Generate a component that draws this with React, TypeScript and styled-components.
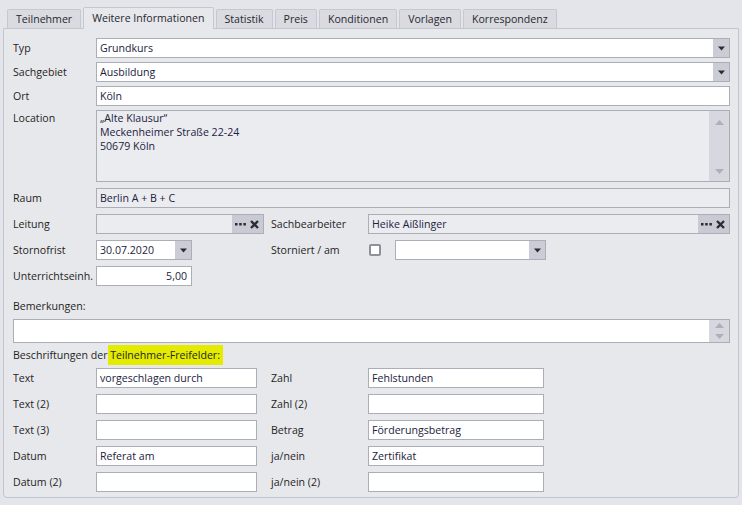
import React from "react";
import styled, { createGlobalStyle, css } from "styled-components";

const GlobalStyle = createGlobalStyle`
  body {
    margin: 0;
    background: #e4e5ea;
    font-family: "Open Sans", "Noto Sans", sans-serif;
    font-size: 10.6px;
    color: #1f1f23;
  }
`;

const TABS = ["Teilnehmer", "Weitere Informationen", "Statistik", "Preis", "Konditionen", "Vorlagen", "Korrespondenz"];

const Arrow = () => (
  <svg width="7" height="5" viewBox="0 0 7 5">
    <path d="M0 0.5h7L3.5 4.5z" fill="#2b2d33" />
  </svg>
);

const ScrollArrow = ({ up }: { up?: boolean }) => (
  <svg width="9" height="5" viewBox="0 0 9 5">
    <path d={up ? "M0 5h9L4.5 0z" : "M0 0h9L4.5 5z"} fill="#aeb0b8" />
  </svg>
);

const Dots = () => (
  <svg width="11" height="3" viewBox="0 0 11 3">
    <rect x="0" y="0" width="2.5" height="2.5" fill="#2b2d33" />
    <rect x="4.2" y="0" width="2.5" height="2.5" fill="#2b2d33" />
    <rect x="8.4" y="0" width="2.5" height="2.5" fill="#2b2d33" />
  </svg>
);

const Cross = () => (
  <svg width="9" height="9" viewBox="0 0 9 9">
    <path d="M1 1l7 7M8 1l-7 7" stroke="#2b2d33" strokeWidth="2.4" />
  </svg>
);

const Combo = ({ value, width }: { value?: string; width?: number }) => (
  <InputBox $width={width}>
    <InputText>{value}</InputText>
    <SideButton>
      <Arrow />
    </SideButton>
  </InputBox>
);

const FIELDS: [string, string, string, string][] = [
  ["Text", "vorgeschlagen durch", "Zahl", "Fehlstunden"],
  ["Text (2)", "", "Zahl (2)", ""],
  ["Text (3)", "", "Betrag", "Förderungsbetrag"],
  ["Datum", "Referat am", "ja/nein", "Zertifikat"],
  ["Datum (2)", "", "ja/nein (2)", ""],
];

const App = () => {
  return (
    <Root>
      <GlobalStyle />
      <TabBar>
        {TABS.map((t, i) => (
          <Tab key={t} $active={i === 1}>{t}</Tab>
        ))}
      </TabBar>
      <Panel>
        <TopGrid>
          <Label>Typ</Label>
          <Wide><Combo value="Grundkurs" /></Wide>
          <Label>Sachgebiet</Label>
          <Wide><Combo value="Ausbildung" /></Wide>
          <Label>Ort</Label>
          <Wide><InputBox><InputText>Köln</InputText></InputBox></Wide>
          <Label $top>Location</Label>
          <Wide>
            <Memo $height={72} $disabled>
              <MemoText>
                „Alte Klausur“<br />
                Meckenheimer Straße 22-24<br />
                50679 Köln
              </MemoText>
              <ScrollBar>
                <ScrollArrow up />
                <ScrollArrow />
              </ScrollBar>
            </Memo>
          </Wide>
        </TopGrid>

        <MidGrid>
          <Label>Raum</Label>
          <Wide><InputBox $disabled><InputText>Berlin A + B + C</InputText></InputBox></Wide>

          <Label>Leitung</Label>
          <InputBox $disabled>
            <InputText />
            <LookupButtons><Dots /><Cross /></LookupButtons>
          </InputBox>
          <SubLabel>Sachbearbeiter</SubLabel>
          <InputBox $disabled>
            <InputText>Heike Aißlinger</InputText>
            <LookupButtons><Dots /><Cross /></LookupButtons>
          </InputBox>

          <Label>Stornofrist</Label>
          <Combo value="30.07.2020" width={96} />
          <SubLabel>Storniert / am</SubLabel>
          <Inline>
            <CheckBox />
            <Combo width={151} />
          </Inline>

          <Label>Unterrichtseinh.</Label>
          <InputBox $width={96}><InputText $right>5,00</InputText></InputBox>
        </MidGrid>

        <SectionLabel>Bemerkungen:</SectionLabel>
        <Memo $height={24}>
          <MemoText />
          <ScrollBar $small>
            <ScrollArrow up />
            <ScrollArrow />
          </ScrollBar>
        </Memo>

        <SectionLabel $tight>
          Beschriftungen der <Highlight>Teilnehmer-Freifelder:</Highlight>
        </SectionLabel>

        <FieldGrid>
          {FIELDS.map(([l1, v1, l2, v2]) => (
            <React.Fragment key={l1}>
              <Label>{l1}</Label>
              <InputBox><InputText>{v1}</InputText></InputBox>
              <FieldLabel>{l2}</FieldLabel>
              <InputBox><InputText>{v2}</InputText></InputBox>
            </React.Fragment>
          ))}
        </FieldGrid>
      </Panel>
    </Root>
  );
};

export default App;

const Root = styled.div`
  width: 742px;
  height: 505px;
  box-sizing: border-box;
  padding: 8px 3px 0 3px;
`;

const TabBar = styled.div`
  display: flex;
  align-items: flex-end;
  gap: 2px;
  padding-left: 4px;
  height: 20px;
`;

const Tab = styled.div<{ $active?: boolean }>`
  height: 19px;
  box-sizing: border-box;
  padding: 0 8px 1px;
  display: flex;
  align-items: center;
  border: 1px solid #c6c7cf;
  border-bottom: none;
  border-radius: 2px 2px 0 0;
  background: #dadbe1;
  color: #26272c;
  ${(p) =>
    p.$active &&
    css`
      height: 22px;
      margin-bottom: -1px;
      background: #e7e8ec;
      position: relative;
      z-index: 1;
      padding: 0 8px 2px;
    `}
`;

const Panel = styled.div`
  height: 470px;
  box-sizing: border-box;
  border: 1px solid #c3c4cc;
  border-radius: 0 0 4px 4px;
  background: #e7e8ec;
  padding: 9px 8px 0 9px;
  display: flex;
  flex-direction: column;
`;

const TopGrid = styled.div`
  display: grid;
  grid-template-columns: 83px 168px 104px 1fr;
  row-gap: 4px;
`;

const MidGrid = styled(TopGrid)`
  row-gap: 6px;
  margin-top: 6px;
`;

const FieldGrid = styled.div`
  display: grid;
  grid-template-columns: 83px 161px 111px 176px;
  row-gap: 6px;
  margin-top: 5px;
`;

const Wide = styled.div`
  grid-column: 2 / -1;
`;

const Label = styled.div<{ $top?: boolean }>`
  display: flex;
  align-items: ${(p) => (p.$top ? "flex-start" : "center")};
  padding-top: ${(p) => (p.$top ? "1px" : "0")};
  height: ${(p) => (p.$top ? "auto" : "20px")};
  white-space: nowrap;
`;

const SubLabel = styled(Label)`
  padding-left: 7px;
`;

const FieldLabel = styled(Label)`
  padding-left: 14px;
`;

const Inline = styled.div`
  display: flex;
  align-items: center;
  gap: 14px;
  padding-left: 1px;
`;

const InputBox = styled.div<{ $width?: number; $disabled?: boolean }>`
  display: flex;
  height: 20px;
  box-sizing: border-box;
  width: ${(p) => (p.$width ? `${p.$width}px` : "100%")};
  border: 1px solid #abadb7;
  background: ${(p) => (p.$disabled ? "#ebecf0" : "#ffffff")};
`;

const InputText = styled.div<{ $right?: boolean }>`
  flex: 1;
  display: flex;
  align-items: center;
  justify-content: ${(p) => (p.$right ? "flex-end" : "flex-start")};
  padding: 0 4px 0 3px;
  color: #1c2240;
  white-space: nowrap;
  overflow: hidden;
`;

const SideButton = styled.div`
  width: 16px;
  display: flex;
  align-items: center;
  justify-content: center;
  background: #cbccd5;
`;

const LookupButtons = styled.div`
  width: 31px;
  display: flex;
  align-items: center;
  justify-content: space-between;
  padding: 0 4px 0 3px;
  box-sizing: border-box;
  background: #c9cbd4;
`;

const Memo = styled.div<{ $height: number; $disabled?: boolean }>`
  display: flex;
  height: ${(p) => p.$height}px;
  box-sizing: border-box;
  border: 1px solid #abadb7;
  background: ${(p) => (p.$disabled ? "#ebecf0" : "#ffffff")};
`;

const MemoText = styled.div`
  flex: 1;
  padding: 0 3px;
  line-height: 14px;
  color: #1c2240;
`;

const ScrollBar = styled.div<{ $small?: boolean }>`
  width: 20px;
  display: flex;
  flex-direction: column;
  align-items: center;
  justify-content: space-between;
  padding: ${(p) => (p.$small ? "3px 0" : "9px 0 7px")};
  box-sizing: border-box;
  background: #d7d8df;
`;

const CheckBox = styled.div`
  width: 12px;
  height: 12px;
  box-sizing: border-box;
  border: 2px solid #8e909c;
  border-radius: 2px;
  background: #ffffff;
`;

const SectionLabel = styled.div<{ $tight?: boolean }>`
  height: 16px;
  display: flex;
  align-items: center;
  margin-top: ${(p) => (p.$tight ? "4px" : "12px")};
  margin-bottom: ${(p) => (p.$tight ? "0" : "5px")};
  white-space: pre;
`;

const Highlight = styled.span`
  background: #e4eb00;
  padding: 3px 3px 3px 2px;
  margin-left: -2px;
`;
